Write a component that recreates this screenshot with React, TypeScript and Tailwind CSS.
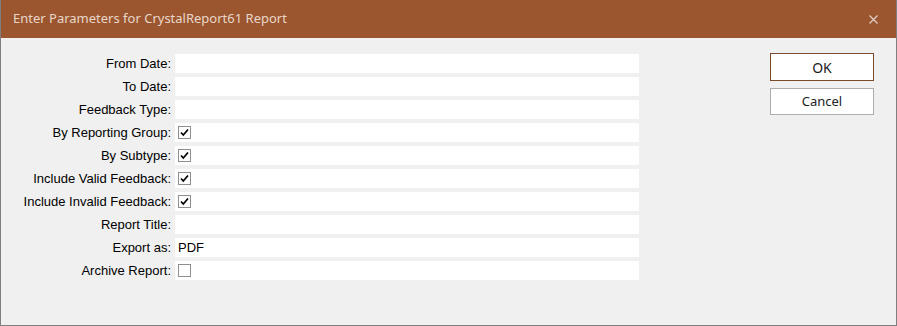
import React from 'react';

const rows: { label: string; value?: string; check?: boolean }[] = [
  { label: 'From Date:' },
  { label: 'To Date:' },
  { label: 'Feedback Type:' },
  { label: 'By Reporting Group:', check: true },
  { label: 'By Subtype:', check: true },
  { label: 'Include Valid Feedback:', check: true },
  { label: 'Include Invalid Feedback:', check: true },
  { label: 'Report Title:' },
  { label: 'Export as:', value: 'PDF' },
  { label: 'Archive Report:', check: false },
];

function CheckBox({ checked }: { checked: boolean }) {
  return (
    <div className="w-[13px] h-[13px] border border-[#8f8f8f] bg-white flex items-center justify-center">
      {checked && (
        <svg width="9" height="9" viewBox="0 0 9 9">
          <path d="M1 4.5 L3.3 7 L8 1.5" fill="none" stroke="#000" strokeWidth="1.7" />
        </svg>
      )}
    </div>
  );
}

export default function App() {
  return (
    <div className="w-[897px] h-[326px] bg-[#f0f0f0] border border-[#7f7f7f] border-t-0 flex flex-col font-['Liberation_Sans',Arial,sans-serif] text-[13px] text-black">
      <div className="h-[38px] bg-[#9b562f] flex items-center justify-between pl-[12px] pr-[18px] shrink-0">
        <span className="text-[#e8d6ca] text-[13px] font-['Noto_Sans',sans-serif]">Enter Parameters for CrystalReport61 Report</span>
        <svg width="9" height="9" viewBox="0 0 9 9">
          <path d="M0.5 0.5 L8.5 8.5 M8.5 0.5 L0.5 8.5" stroke="#dcd0c8" strokeWidth="1.2" />
        </svg>
      </div>
      <div className="flex pt-[16px]">
        <div className="flex flex-col gap-[4px] w-[638px]">
          {rows.map(r => (
            <div key={r.label} className="flex items-center h-[19px]">
              <div className="w-[174px] text-right pr-[4px] leading-none">{r.label}</div>
              <div className="flex-1 h-[19px] bg-white flex items-center pl-[3px]">
                {r.check !== undefined ? <CheckBox checked={r.check} /> : <span className="text-[13px] leading-none">{r.value}</span>}
              </div>
            </div>
          ))}
        </div>
        <div className="ml-[131px] -mt-[1px] flex flex-col gap-[7px]">
          <button className="w-[104px] h-[28px] bg-white border border-[#7d4a2c] text-[14px] font-['Noto_Sans',sans-serif] text-[#222]">OK</button>
          <button className="w-[104px] h-[27px] bg-white border border-[#adadad] text-[13px] font-['Noto_Sans',sans-serif] text-[#222]">Cancel</button>
        </div>
      </div>
    </div>
  );
}
